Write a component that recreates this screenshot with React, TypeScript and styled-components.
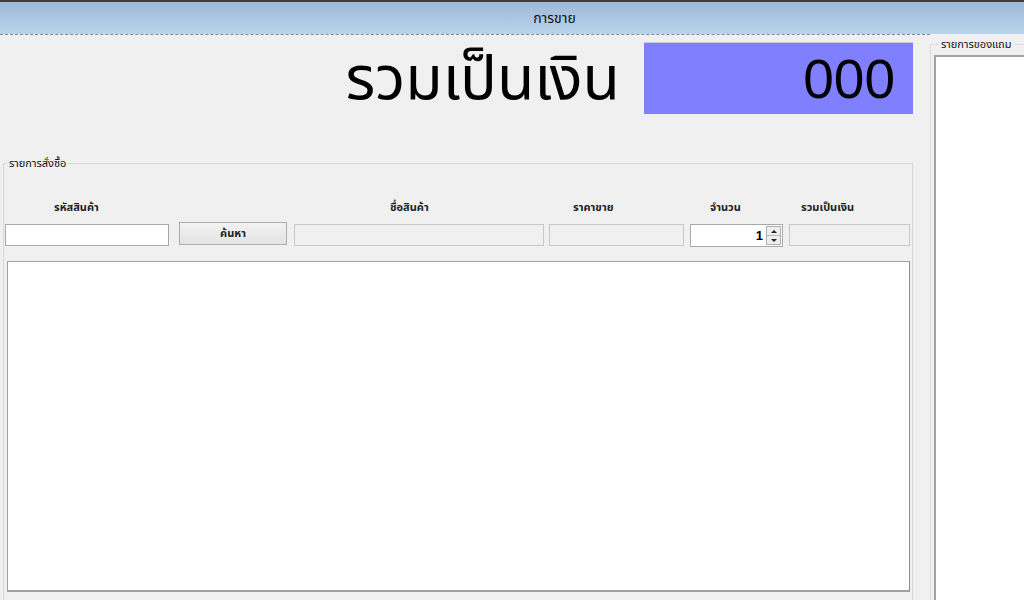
import React from "react";
import styled, { createGlobalStyle } from "styled-components";

const Global = createGlobalStyle`
  html, body { margin: 0; padding: 0; }
  body {
    width: 1024px;
    height: 600px;
    overflow: hidden;
    background: #f0f0f0;
    font-family: Tahoma, "Noto Sans Thai", "Noto Sans", "DejaVu Sans", sans-serif;
  }
`;

const Page = styled.div`
  width: 1024px;
  height: 600px;
  display: flex;
  flex-direction: column;
  overflow: hidden;
`;

const TitleBar = styled.div`
  height: 32px;
  border-top: 2px solid #3c3c3c;
  background: linear-gradient(#9dbad9, #b9d3ec);
  display: flex;
  align-items: center;
  justify-content: center;
  padding-left: 85px;
  font-size: 14px;
  color: #111;
`;

const Body = styled.div`
  flex: 1;
  display: flex;
  min-height: 0;
`;

const Main = styled.div`
  width: 930px;
  border-top: 1px dashed #8a8a8a;
  display: flex;
  flex-direction: column;
`;

const TotalRow = styled.div`
  display: flex;
  justify-content: flex-end;
  align-items: center;
  gap: 24px;
  padding: 7px 17px 0 0;
  height: 72px;
`;

const TotalLabel = styled.div`
  font-size: 61px;
  line-height: 1;
  color: #000;
  padding-top: 4px;
`;

const TotalBox = styled.div`
  width: 269px;
  height: 72px;
  box-sizing: border-box;
  background: #8080ff;
  border-top: 1px solid #c8c8d8;
  display: flex;
  align-items: center;
  justify-content: flex-end;
  padding-right: 18px;
  font-family: "Liberation Sans", Arial, sans-serif;
  font-size: 55px;
  color: #000;
`;

const OrderGroup = styled.fieldset`
  margin: 41px 17px 0 3px;
  padding: 0;
  border: 1px solid #d8d8d8;
  border-bottom: none;
  flex: 1;
  display: flex;
  flex-direction: column;
  min-height: 0;
`;

const Legend = styled.legend`
  margin-left: 3px;
  padding: 0 2px;
  font-size: 11px;
  color: #111;
`;

const FieldRow = styled.div`
  display: flex;
  align-items: flex-end;
  margin-top: 25px;
  padding-left: 1px;
`;

const FieldCol = styled.div<{ $w: number; $gap: number }>`
  width: ${(p) => p.$w}px;
  margin-left: ${(p) => p.$gap}px;
  display: flex;
  flex-direction: column;
`;

const FieldLabel = styled.div<{ $indent: number }>`
  padding-left: ${(p) => p.$indent}px;
  height: 18px;
  font-size: 11px;
  font-weight: bold;
  color: #222;
  margin-bottom: 7px;
  white-space: nowrap;
`;

const TextBox = styled.div<{ $disabled?: boolean }>`
  height: 22px;
  box-sizing: border-box;
  border: 1px solid ${(p) => (p.$disabled ? "#c8c8c8" : "#a8a8a8")};
  background: ${(p) => (p.$disabled ? "#f0f0f0" : "#fff")};
`;

const Button = styled.div`
  height: 23px;
  box-sizing: border-box;
  border: 1px solid #adadad;
  background: linear-gradient(#f2f2f2, #e3e3e3);
  display: flex;
  align-items: center;
  justify-content: center;
  font-size: 11px;
  font-weight: bold;
  color: #222;
  margin-bottom: 1px;
`;

const Spin = styled.div`
  height: 23px;
  box-sizing: border-box;
  border: 1px solid #a8a8a8;
  background: #fff;
  display: flex;
  align-items: center;
  justify-content: flex-end;
  margin-bottom: -1px;
`;

const SpinValue = styled.span`
  font-family: "Liberation Sans", Arial, sans-serif;
  font-size: 13px;
  font-weight: bold;
  padding-right: 3px;
`;

const SpinButtons = styled.div`
  width: 15px;
  height: 19px;
  margin-right: 1px;
  display: flex;
  flex-direction: column;
  border: 1px solid #b0b0b0;
  box-sizing: border-box;
`;

const SpinBtn = styled.div`
  flex: 1;
  background: #ededed;
  display: flex;
  align-items: center;
  justify-content: center;
  & + & { border-top: 1px solid #b8b8b8; }
`;

const Arrow = styled.div<{ $up?: boolean }>`
  width: 0;
  height: 0;
  border-left: 3px solid transparent;
  border-right: 3px solid transparent;
  ${(p) => (p.$up ? "border-bottom: 3px solid #222;" : "border-top: 3px solid #222;")}
`;

const ListBox = styled.div`
  margin: 15px 0 0 3px;
  width: 903px;
  height: 331px;
  box-sizing: border-box;
  background: #fff;
  border: 1px solid #a0a0a0;
  border-right-color: #8c8c8c;
  border-bottom: 2px solid #a0a0a0;
`;

const Side = styled.div`
  flex: 1;
  display: flex;
  flex-direction: column;
`;

const SideGroup = styled.fieldset`
  margin: 2px 0 0 0;
  padding: 0 0 0 3px;
  border: 1px solid #dcdcdc;
  border-right: none;
  border-bottom: none;
  flex: 1;
  display: flex;
  flex-direction: column;
  min-height: 0;
`;

const SideLegend = styled.legend`
  margin-left: 5px;
  padding: 0 2px;
  font-size: 11px;
  color: #111;
  white-space: nowrap;
`;

const SideList = styled.div`
  margin-top: 2px;
  flex: 1;
  background: #fff;
  border-left: 2px solid #a0a0a0;
  border-top: 2px solid #a0a0a0;
`;

const fields = [
  { label: "รหัสสินค้า", w: 164, gap: 0, indent: 49, kind: "input" },
  { label: "", w: 108, gap: 10, indent: 0, kind: "button" },
  { label: "ชื่อสินค้า", w: 250, gap: 7, indent: 96, kind: "disabled" },
  { label: "ราคาขาย", w: 135, gap: 5, indent: 24, kind: "disabled" },
  { label: "จำนวน", w: 93, gap: 6, indent: 20, kind: "spin" },
  { label: "รวมเป็นเงิน", w: 121, gap: 6, indent: 12, kind: "disabled" },
];

export default function App() {
  return (
    <>
      <Global />
      <Page>
        <TitleBar>การขาย</TitleBar>
        <Body>
          <Main>
            <TotalRow>
              <TotalLabel>รวมเป็นเงิน</TotalLabel>
              <TotalBox>000</TotalBox>
            </TotalRow>
            <OrderGroup>
              <Legend>รายการสั่งซื้อ</Legend>
              <FieldRow>
                {fields.map((f, i) => (
                  <FieldCol key={i} $w={f.w} $gap={f.gap}>
                    <FieldLabel $indent={f.indent}>{f.label}</FieldLabel>
                    {f.kind === "input" && <TextBox />}
                    {f.kind === "disabled" && <TextBox $disabled />}
                    {f.kind === "button" && <Button>ค้นหา</Button>}
                    {f.kind === "spin" && (
                      <Spin>
                        <SpinValue>1</SpinValue>
                        <SpinButtons>
                          <SpinBtn>
                            <Arrow $up />
                          </SpinBtn>
                          <SpinBtn>
                            <Arrow />
                          </SpinBtn>
                        </SpinButtons>
                      </Spin>
                    )}
                  </FieldCol>
                ))}
              </FieldRow>
              <ListBox />
            </OrderGroup>
          </Main>
          <Side>
            <SideGroup>
              <SideLegend>รายการของแถม</SideLegend>
              <SideList />
            </SideGroup>
          </Side>
        </Body>
      </Page>
    </>
  );
}
